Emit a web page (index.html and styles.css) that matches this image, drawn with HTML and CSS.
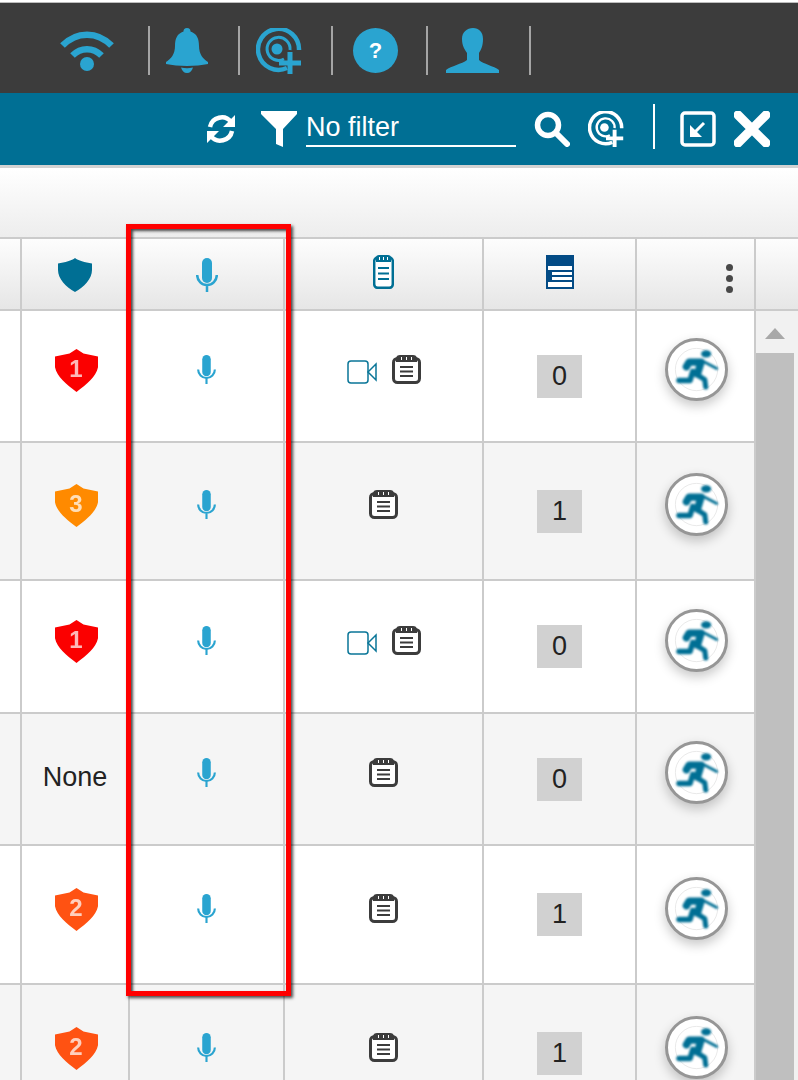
FILE: index.html
```html
<!DOCTYPE html>
<html lang="en">
<head>
<meta charset="utf-8">
<title>Call list</title>
<link rel="stylesheet" href="styles.css">
</head>
<body>
<svg class="defs" aria-hidden="true">
  <symbol id="i-target" viewBox="0 0 46 46">
    <path d="M31 40A20.500 20.500 0 1 1 43 22" fill="none" stroke="currentColor" stroke-width="4.500"/>
    <path d="M28 31A11.500 11.500 0 1 1 34 22" fill="none" stroke="currentColor" stroke-width="3"/>
    <circle cx="21" cy="21" r="5.500" fill="currentColor"/>
    <path d="M34 24V46M23 35H45" fill="none" stroke="currentColor" stroke-width="5"/>
  </symbol>
  <symbol id="i-mic" viewBox="0 0 22 34">
    <rect x="6" y="0" width="10" height="25" rx="5" fill="currentColor"/>
    <path d="M1.200 17a9.800 10 0 0 0 19.600 0M11 27v7" fill="none" stroke="currentColor" stroke-width="2.500"/>
  </symbol>
  <symbol id="i-shield" viewBox="0 0 34 34">
    <path d="M17 0C20 2.500 27 4.500 34 5.500V12C34 21 26 29 17 34 8 29 0 21 0 12V5.500C7 4.500 14 2.500 17 0Z" fill="currentColor"/>
  </symbol>
  <symbol id="i-level" viewBox="0 0 34 34">
    <path d="M17 0 22.500 3.500 34 6V14.500C32.500 22 25 28 17 34 9 28 1.500 22 0 14.500V6L11.500 3.500Z" fill="currentColor"/>
  </symbol>
  <symbol id="i-note" viewBox="0 0 29 29">
    <rect x="1.500" y="3.500" width="26" height="24" rx="4" fill="#fff" stroke="currentColor" stroke-width="3"/>
    <path d="M4 7V3.500C4 1 6 0 8 0H21C23 0 25 1 25 3.500V7Z" fill="currentColor"/>
    <path d="M9.500 2V5M14.500 2V5M19.500 2V5" stroke="#fff" stroke-width="1"/>
    <path d="M8 12H21M8 16.500H21M8 21H21" stroke="currentColor" stroke-width="2"/>
  </symbol>
  <symbol id="i-run" viewBox="0 0 62 62">
    <circle cx="31" cy="31" r="23" fill="none" stroke="#ddd" stroke-width=".7"/>
    <g fill="none" stroke="currentColor" stroke-linecap="round" stroke-linejoin="round" class="run-blur">
      <ellipse cx="41.500" cy="14" rx="5.500" ry="4" fill="currentColor" stroke="none"/>
      <path d="M20 28 23 23H36L32 36" stroke-width="8"/>
      <path d="M38 22 53 30" stroke-width="3"/>
      <path d="M32 37 40 42 41 50" stroke-width="5.500"/>
      <path d="M27 33 24 43 12 43" stroke-width="6"/>
    </g>
  </symbol>
</svg>

<header class="status-bar">
  <div class="status-item item-wifi">
    <svg class="status-icon icon-wifi" viewBox="0 0 54 41">
      <path d="M2.500 15.500C16.500 1 37.500 1 51.500 15.500M12.500 25.500C21 17 33 17 41.500 25.500" fill="none" stroke="currentColor" stroke-width="6.500"/>
      <circle cx="27" cy="34" r="7" fill="currentColor"/>
    </svg>
  </div>
  <div class="status-item item-bell">
    <svg class="status-icon icon-bell" viewBox="0 0 42 45">
      <path d="M21 0C23.500 0 24.500 1.500 24.500 3.500 31 5.500 33 11 33 18 33 26 37 31 42 34V36C30 38.500 12 38.500 0 36V34C5 31 9 26 9 18 9 11 11 5.500 17.500 3.500 17.500 1.500 18.500 0 21 0Z" fill="currentColor"/>
      <path d="M15 39.500C19 40.500 23 40.500 27 39.500 26 43 24 45 21 45 18 45 16 43 15 39.500Z" fill="currentColor"/>
    </svg>
  </div>
  <div class="status-item item-target">
    <svg class="status-icon icon-target"><use href="#i-target"/></svg>
  </div>
  <div class="status-item item-help">
    <span class="help-badge">?</span>
  </div>
  <div class="status-item item-user">
    <svg class="status-icon icon-user" viewBox="0 0 53 45">
      <path d="M27 0C33 0 37 4 37 11 37 18 35 22 33 25V32C37 36 48 38 53 42V45H0V42C5 38 16 36 21 32V25C19 22 16 18 16 11 16 4 21 0 27 0Z" fill="currentColor"/>
    </svg>
  </div>
</header>

<div class="title-bar">
  <svg class="tool-icon tool-refresh" viewBox="0 0 30 30">
    <path d="M4 13C6 3 19 0 25 8M26 17C24 27 11 30 5 22" fill="none" stroke="currentColor" stroke-width="4.500"/>
    <path d="M29 1V13H17ZM1 29V17H13Z" fill="currentColor"/>
  </svg>
  <svg class="tool-icon tool-filter" viewBox="0 0 36 36">
    <path d="M0 0H36V3L22 18V36L15 33V18L0 3Z" fill="currentColor"/>
  </svg>
  <div class="filter-field">No filter</div>
  <svg class="tool-icon tool-search" viewBox="0 0 36 36">
    <circle cx="14" cy="14" r="10.500" fill="none" stroke="currentColor" stroke-width="5.500"/>
    <path d="M22 22 33 33" stroke="currentColor" stroke-width="6" stroke-linecap="round"/>
  </svg>
  <svg class="tool-icon tool-target"><use href="#i-target"/></svg>
  <span class="tool-divider"></span>
  <svg class="tool-icon tool-min" viewBox="0 0 36 36">
    <rect x="2" y="2" width="32" height="32" rx="3" fill="none" stroke="currentColor" stroke-width="3.500"/>
    <path d="M24 12 14 22" stroke="currentColor" stroke-width="3"/>
    <path d="M10 14V26H22Z" fill="currentColor"/>
  </svg>
  <svg class="tool-icon tool-close" viewBox="0 0 36 36">
    <path d="M4 4 32 32M32 4 4 32" stroke="currentColor" stroke-width="9" stroke-linecap="round"/>
  </svg>
</div>

<div class="toolbar"></div>

<main class="grid-wrap">
  <div class="grid-head">
    <div class="hcell"></div>
    <div class="hcell"><svg class="ic-hshield"><use href="#i-shield"/></svg></div>
    <div class="hcell"><svg class="ic-hmic"><use href="#i-mic"/></svg></div>
    <div class="hcell hcell-raised">
      <svg class="ic-hnote" viewBox="0 0 21 34">
        <rect x="1.200" y="2.500" width="18.600" height="30.300" rx="3.500" fill="#fff" stroke="currentColor" stroke-width="2.500"/>
        <path d="M3 7V3C3 1 4 0 6 0H15C17 0 18 1 18 3V7Z" fill="currentColor"/>
        <path d="M6.500 2V5M10.500 2V5M14.500 2V5" stroke="#fff" stroke-width="1"/>
        <path d="M5 13H16M5 18.500H16M5 24H16" stroke="currentColor" stroke-width="1.800"/>
      </svg>
    </div>
    <div class="hcell hcell-raised">
      <svg class="ic-hdoc" viewBox="0 0 28 34">
        <rect width="28" height="34" fill="#034b85"/>
        <path d="M2 11H26V15H2ZM6 17H26V20H6ZM6 22H26V25H6ZM2 27H26V32H2Z" fill="#fff"/>
      </svg>
    </div>
    <div class="hcell hcell-menu">
      <span class="kebab"><i></i><i></i><i></i></span>
    </div>
    <div class="hcell hcell-end"></div>
  </div>

  <div class="grid-body">
    <div class="rows">

      <div class="row row-132">
        <div class="cell"></div>
        <div class="cell cell-up"><span class="level level-red"><svg class="ic-level"><use href="#i-level"/></svg><b>1</b></span></div>
        <div class="cell cell-up"><svg class="ic-mic"><use href="#i-mic"/></svg></div>
        <div class="cell cell-up cell-docs">
          <svg class="ic-video" viewBox="0 0 30 24"><rect x="1" y="1" width="20" height="22" rx="3" fill="none" stroke="currentColor" stroke-width="1.500"/><path d="M21 12 29 4V20Z" fill="none" stroke="currentColor" stroke-width="1.500"/></svg>
          <svg class="ic-note"><use href="#i-note"/></svg>
        </div>
        <div class="cell"><span class="count">0</span></div>
        <div class="cell cell-up"><span class="run"><svg class="ic-run"><use href="#i-run"/></svg></span></div>
      </div>

      <div class="row row-138">
        <div class="cell"></div>
        <div class="cell cell-up"><span class="level level-orange"><svg class="ic-level"><use href="#i-level"/></svg><b>3</b></span></div>
        <div class="cell cell-up"><svg class="ic-mic"><use href="#i-mic"/></svg></div>
        <div class="cell cell-up cell-docs"><svg class="ic-note"><use href="#i-note"/></svg></div>
        <div class="cell"><span class="count">1</span></div>
        <div class="cell cell-up"><span class="run"><svg class="ic-run"><use href="#i-run"/></svg></span></div>
      </div>

      <div class="row row-133">
        <div class="cell"></div>
        <div class="cell cell-up"><span class="level level-red"><svg class="ic-level"><use href="#i-level"/></svg><b>1</b></span></div>
        <div class="cell cell-up"><svg class="ic-mic"><use href="#i-mic"/></svg></div>
        <div class="cell cell-up cell-docs">
          <svg class="ic-video" viewBox="0 0 30 24"><rect x="1" y="1" width="20" height="22" rx="3" fill="none" stroke="currentColor" stroke-width="1.500"/><path d="M21 12 29 4V20Z" fill="none" stroke="currentColor" stroke-width="1.500"/></svg>
          <svg class="ic-note"><use href="#i-note"/></svg>
        </div>
        <div class="cell"><span class="count">0</span></div>
        <div class="cell cell-up"><span class="run"><svg class="ic-run"><use href="#i-run"/></svg></span></div>
      </div>

      <div class="row row-132">
        <div class="cell"></div>
        <div class="cell cell-none">None</div>
        <div class="cell cell-up"><svg class="ic-mic"><use href="#i-mic"/></svg></div>
        <div class="cell cell-up cell-docs"><svg class="ic-note"><use href="#i-note"/></svg></div>
        <div class="cell"><span class="count">0</span></div>
        <div class="cell cell-up"><span class="run"><svg class="ic-run"><use href="#i-run"/></svg></span></div>
      </div>

      <div class="row row-139">
        <div class="cell"></div>
        <div class="cell cell-up"><span class="level level-deep"><svg class="ic-level"><use href="#i-level"/></svg><b>2</b></span></div>
        <div class="cell cell-up"><svg class="ic-mic"><use href="#i-mic"/></svg></div>
        <div class="cell cell-up cell-docs"><svg class="ic-note"><use href="#i-note"/></svg></div>
        <div class="cell"><span class="count">1</span></div>
        <div class="cell cell-up"><span class="run"><svg class="ic-run"><use href="#i-run"/></svg></span></div>
      </div>

      <div class="row row-139">
        <div class="cell"></div>
        <div class="cell cell-up"><span class="level level-deep"><svg class="ic-level"><use href="#i-level"/></svg><b>2</b></span></div>
        <div class="cell cell-up"><svg class="ic-mic"><use href="#i-mic"/></svg></div>
        <div class="cell cell-up cell-docs"><svg class="ic-note"><use href="#i-note"/></svg></div>
        <div class="cell"><span class="count">1</span></div>
        <div class="cell cell-up"><span class="run"><svg class="ic-run"><use href="#i-run"/></svg></span></div>
      </div>

    </div>
    <aside class="scrollbar">
      <span class="scroll-up"></span>
      <span class="scroll-thumb"></span>
    </aside>
  </div>
</main>

<div class="highlight"></div>
</body>
</html>
```

FILE: styles.css
```css
* { box-sizing: border-box; }

html, body {
  margin: 0;
  height: 1080px;
  overflow: hidden;
  background: #fff;
  font-family: "Liberation Sans", Arial, sans-serif;
  color: #222;
}

.defs { position: absolute; width: 0; height: 0; }

/* top status bar */
.status-bar {
  display: flex;
  height: 91px;
  margin-top: 2px;
  border-top: 1px solid #bdbdbd;
  background: #3c3c3c;
  color: #2aa4d0;
}
.status-item {
  position: relative;
  display: flex;
  align-items: flex-start;
  height: 100%;
  padding-top: 25px;
}
.status-item::after {
  content: "";
  position: absolute;
  right: 0;
  top: 23px;
  width: 2px;
  height: 49px;
  background: #a5a5a5;
}
.item-wifi { width: 150px; padding-left: 60px; padding-top: 27px; }
.item-bell { width: 90px; padding-left: 16px; }
.item-target { width: 93px; padding-left: 16px; }
.item-help { width: 95px; padding-left: 20px; }
.item-user { width: 103px; padding-left: 18px; }

.icon-wifi { width: 54px; height: 41px; }
.icon-bell { width: 42px; height: 45px; }
.icon-target { width: 46px; height: 46px; }
.icon-user { width: 53px; height: 45px; }

.help-badge {
  display: flex;
  align-items: center;
  justify-content: center;
  width: 45px;
  height: 45px;
  border-radius: 50%;
  background: #2aa4d0;
  color: #fff;
  font-size: 22px;
  font-weight: 700;
}

/* teal title bar */
.title-bar {
  display: flex;
  align-items: center;
  height: 72px;
  padding-left: 206px;
  background: #006f94;
  color: #fff;
}
.tool-icon { flex: none; width: 36px; height: 36px; }
.tool-refresh { width: 30px; height: 30px; margin-right: 25px; }
.tool-filter { margin-right: 9px; }
.filter-field {
  width: 210px;
  height: 36px;
  margin-right: 18px;
  border-bottom: 2px solid #fff;
  font-size: 27px;
  line-height: 33px;
}
.tool-search { margin-right: 18px; }
.tool-target { margin-right: 29px; }
.tool-divider {
  flex: none;
  width: 2px;
  height: 45px;
  margin: 0 25px 5px 0;
  background: #fff;
}
.tool-min { margin-right: 18px; }

/* empty toolbar */
.toolbar {
  height: 72px;
  border-top: 3px solid #d2d2d2;
  background: linear-gradient(#fff, #ededed);
}

/* grid */
.grid-head,
.row {
  display: grid;
  grid-template-columns: 22px 108px 155px 199px 153px 119px;
}
.grid-head {
  grid-template-columns: 22px 108px 155px 199px 153px 119px 42px;
  height: 74px;
  border-top: 2px solid #cbcbcb;
  border-bottom: 2px solid #cbcbcb;
  background: linear-gradient(#fdfdfd, #e6e6e6);
}
.hcell {
  display: flex;
  align-items: center;
  justify-content: center;
  padding-top: 1px;
  border-right: 2px solid #cbcbcb;
  color: #006f94;
}
.hcell-raised { padding-top: 0; padding-bottom: 4px; }
.hcell-menu { justify-content: flex-end; padding: 8px 21px 0 0; }
.hcell-end { border-right: 0; }

.ic-hshield { width: 34px; height: 34px; }
.ic-hmic { width: 22px; height: 34px; color: #2aa4d0; }
.ic-hnote { width: 21px; height: 34px; }
.ic-hdoc { width: 28px; height: 34px; }

.kebab { display: flex; flex-direction: column; gap: 4px; }
.kebab i {
  display: block;
  width: 7px;
  height: 7px;
  border-radius: 50%;
  background: #484848;
}

.grid-body { display: flex; }
.rows { width: 756px; }

.row { border-bottom: 2px solid #cbcbcb; background: #fff; }
.row:nth-child(even) { background: #f5f5f5; }
.row-132 { height: 132px; }
.row-133 { height: 133px; }
.row-138 { height: 138px; }
.row-139 { height: 139px; }

.cell {
  display: flex;
  align-items: center;
  justify-content: center;
  border-right: 2px solid #cbcbcb;
}
.cell-up { padding-bottom: 13px; }
.cell-none { padding-bottom: 4px; font-size: 27px; }
.cell-docs { gap: 15px; color: #3c3c3c; }

.ic-mic { width: 21px; height: 29px; color: #2aa4d0; }
.ic-note { width: 29px; height: 29px; }
.ic-video { width: 30px; height: 24px; margin-top: 5px; color: #0a7698; }

.level {
  position: relative;
  display: flex;
  align-items: center;
  justify-content: center;
  width: 43px;
  height: 43px;
  margin: 2px 0 0 2px;
}
.ic-level { position: absolute; inset: 0; width: 43px; height: 43px; }
.level b {
  position: relative;
  margin-bottom: 3px;
  color: #fff;
  opacity: .72;
  font-size: 24px;
  font-weight: 700;
  line-height: 1;
}
.level-red { color: #fb0000; }
.level-orange { color: #ff8a00; }
.level-deep { color: #ff5212; }

.count {
  display: flex;
  align-items: center;
  justify-content: center;
  width: 45px;
  height: 43px;
  background: #d1d1d1;
  font-size: 27px;
}

.run {
  display: flex;
  align-items: center;
  justify-content: center;
  width: 63px;
  height: 63px;
  margin-left: 2px;
  border: 3px solid #969696;
  border-radius: 50%;
  background: #fff;
  box-shadow: 0 5px 12px rgba(0, 0, 0, .22);
  color: #006f94;
}
.ic-run {
  width: 57px;
  height: 57px;
  border-radius: 50%;
}
.run-blur { filter: blur(.9px); }

/* scrollbar */
.scrollbar {
  display: flex;
  flex-direction: column;
  align-items: flex-start;
  width: 42px;
  height: 769px;
  background: #f1f1f1;
}
.scroll-up {
  flex: none;
  width: 0;
  height: 0;
  margin: 17px 0 14px 9px;
  border-left: 10px solid transparent;
  border-right: 10px solid transparent;
  border-bottom: 11px solid #a8a8a8;
}
.scroll-thumb {
  flex: 1;
  width: 38px;
  background: #bfbfbf;
}

/* annotation drawn over the screenshot */
.highlight {
  position: absolute;
  left: 126px;
  top: 224px;
  width: 165px;
  height: 772px;
  border: 5px solid #f00;
  box-shadow: 2px 2px 3px rgba(0, 0, 0, .7), inset 2px 2px 3px rgba(0, 0, 0, .7);
}
```
